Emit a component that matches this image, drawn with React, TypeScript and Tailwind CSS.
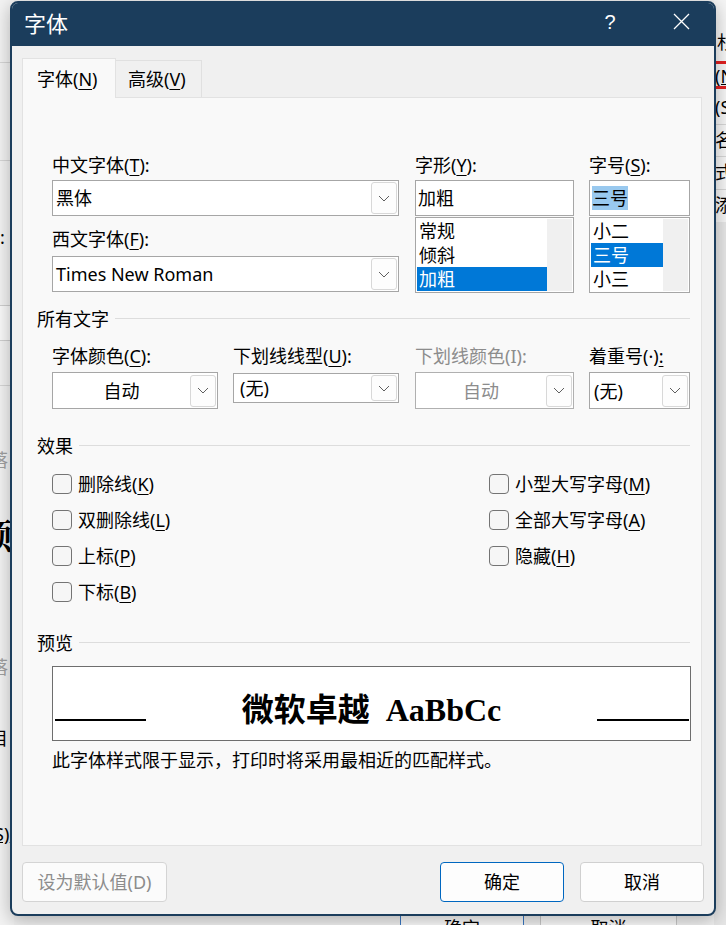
import React from "react";

const FONT = "font-[Noto_Sans,Noto_Sans_CJK_SC,sans-serif]";

const Chevron = ({ color = "#5f5f5f" }: { color?: string }) => (
  <svg width="12" height="7" viewBox="0 0 12 7">
    <path d="M1 1l5 5 5-5" fill="none" stroke={color} strokeWidth="1" />
  </svg>
);

const DropBtn = ({ h = 32 }: { h?: number }) => (
  <div
    className={`w-[26px] ${h === 32 ? "h-[32px]" : "h-[26px]"} shrink-0 border border-[#d8d8d8] rounded-[3px] bg-[#fdfdfd] flex items-center justify-center`}
  >
    <Chevron />
  </div>
);

const U = ({ children }: { children: React.ReactNode }) => (
  <span className="underline underline-offset-[3px] decoration-1">{children}</span>
);

const Label = ({ children, gray }: { children: React.ReactNode; gray?: boolean }) => (
  <div className={`h-[24px] leading-[24px] text-[18px] whitespace-nowrap ${gray ? "text-[#8c8c8c]" : "text-black"}`}>
    {children}
  </div>
);

const Heading = ({ text }: { text: string }) => (
  <div className="flex items-center pl-[14px] pr-[11px]">
    <span className="h-[24px] leading-[24px] text-[18px] text-black">{text}</span>
    <div className="flex-1 ml-[6px] h-px bg-[#dddddd] -mt-[2px]" />
  </div>
);

const Checkbox = ({ children }: { children: React.ReactNode }) => (
  <div className="flex items-center h-[24px]">
    <div className="w-[20px] h-[20px] border border-[#747474] rounded-[4px] bg-[#f6f6f6] shrink-0" />
    <span className="ml-[6px] text-[18px] leading-[24px] text-black whitespace-nowrap">{children}</span>
  </div>
);

export default function App() {
  return (
    <div className={`relative w-[726px] h-[925px] overflow-hidden bg-[#f0f0f0] ${FONT}`}>
      {/* background window fragments */}
      <div className="absolute left-0 top-0 w-[14px] h-[925px] bg-[#f3f3f3]">
        <div className="absolute left-0 top-[62px] w-[14px] h-px bg-[#d6d6d6]" />
        <div className="absolute left-0 top-[160px] w-[14px] h-px bg-[#d6d6d6]" />
        <div className="absolute left-0 top-[225px] text-[18px] leading-[24px] text-black">:</div>
        <div className="absolute left-0 top-[305px] w-[14px] h-[36px] border-y border-[#cfcfcf] bg-[#fafafa]" />
        <div className="absolute left-0 top-[385px] w-[14px] h-px bg-[#d6d6d6]" />
        <div className="absolute -left-[10px] top-[448px] text-[18px] leading-[24px] text-[#a0a0a0]">落</div>
        <div className="absolute -left-[22px] top-[518px] text-[34px] leading-[40px] font-[Liberation_Serif,Noto_Serif_CJK_SC,serif] font-bold text-black">颀</div>
        <div className="absolute -left-[10px] top-[655px] text-[18px] leading-[24px] text-[#a0a0a0]">落</div>
        <div className="absolute -left-[8px] top-[696px] text-[18px] leading-[24px] text-black">,</div>
        <div className="absolute -left-[10px] top-[726px] text-[18px] leading-[24px] text-black">目</div>
        <div className="absolute -left-[4px] top-[778px] text-[18px] leading-[24px] text-black">,</div>
        <div className="absolute -left-[6px] top-[822px] text-[18px] leading-[24px] text-black underline">S)</div>
      </div>
      <div className="absolute right-0 top-0 w-[12px] h-[925px] bg-[#e6e6e6]">
        <div className="absolute left-0 top-0 w-[12px] h-[222px] bg-[#f5f5f5]" />
        <div className="absolute left-[3px] top-[30px] text-[18px] leading-[24px] text-black">杉</div>
        <div className="absolute left-0 top-[61px] w-[12px] h-[3px] bg-[#e02020]" />
        <div className="absolute left-[1px] top-[64px] text-[18px] leading-[24px] text-black underline">(N</div>
        <div className="absolute left-0 top-[86px] w-[12px] h-[3px] bg-[#e02020]" />
        <div className="absolute left-[1px] top-[95px] text-[18px] leading-[24px] text-black">(S</div>
        <div className="absolute left-0 top-[124px] w-[12px] h-px bg-[#d6d6d6]" />
        <div className="absolute left-[1px] top-[128px] text-[18px] leading-[24px] text-black">名</div>
        <div className="absolute left-0 top-[156px] w-[12px] h-px bg-[#d6d6d6]" />
        <div className="absolute left-[1px] top-[160px] text-[18px] leading-[24px] text-black">式</div>
        <div className="absolute left-0 top-[189px] w-[12px] h-px bg-[#d6d6d6]" />
        <div className="absolute left-[1px] top-[193px] text-[18px] leading-[24px] text-black">添</div>
      </div>
      <div className="absolute left-[400px] top-[905px] w-[124px] h-[46px] border border-[#3a78c2] bg-[#fbfbfb] flex items-center justify-center text-[18px] text-black">确定</div>
      <div className="absolute left-[540px] top-[905px] w-[137px] h-[46px] border border-[#c8c8c8] bg-[#fbfbfb] flex items-center justify-center text-[18px] text-black">取消</div>

      {/* dialog */}
      <div className="absolute left-[10px] top-[1px] w-[706px] h-[915px] border-2 border-[#1b3d5c] rounded-[8px] bg-[#f0f0f0] flex flex-col overflow-hidden shadow-[0_4px_18px_rgba(0,0,0,0.28)]">
        {/* title bar */}
        <div className="h-[43px] bg-[#1b3d5c] flex items-center shrink-0">
          <div className="pl-[12px] text-[22px] leading-[28px] text-white -mt-[4px]">字体</div>
          <div className="flex-1" />
          <div className="w-[46px] flex items-center justify-center text-white text-[20px] leading-[26px] font-[Liberation_Sans,sans-serif] -mt-[6px]">?</div>
          <div className="ml-[25px] mr-[10px] w-[46px] flex items-center justify-center -mt-[6px]">
            <svg width="17" height="17" viewBox="0 0 17 17">
              <path d="M1 1L16 16M16 1L1 16" stroke="#ffffff" strokeWidth="1.3" fill="none" />
            </svg>
          </div>
        </div>

        {/* body */}
        <div className="pt-[12px] pl-[10px] flex flex-col">
          {/* tabs */}
          <div className="flex items-end h-[39px] relative z-10">
            <div className="w-[94px] h-[40px] -mb-px bg-[#f9f9f9] border-l border-t border-r border-[#e2e2e2] flex items-center pl-[14px] text-[18px] leading-[24px] text-black">
              字体(<U>N</U>)
            </div>
            <div className="w-[86px] h-[37px] bg-[#f0f0f0] border-t border-r border-[#e0e0e0] flex items-center pl-[12px] text-[18px] leading-[24px] text-black">
              高级(<U>V</U>)
            </div>
          </div>

          {/* panel */}
          <div className="w-[680px] h-[749px] bg-[#f9f9f9] border border-[#e2e2e2] pt-[55px] flex flex-col">
            {/* section 1 */}
            <div className="flex pl-[29px]">
              <div className="w-[347px] flex flex-col">
                <Label>中文字体(<U>T</U>):</Label>
                <div className="mt-[3px] h-[36px] border border-[#a6a6a6] bg-white flex items-center pl-[3px] pr-px">
                  <span className="flex-1 text-[18px] leading-[24px] text-black">黑体</span>
                  <DropBtn />
                </div>
                <div className="mt-[11px]">
                  <Label>西文字体(<U>F</U>):</Label>
                </div>
                <div className="mt-[5px] h-[36px] border border-[#a6a6a6] bg-white flex items-center pl-[3px] pr-px">
                  <span className="flex-1 text-[18px] leading-[24px] text-black">Times New Roman</span>
                  <DropBtn />
                </div>
              </div>

              <div className="ml-[16px] w-[159px] flex flex-col">
                <Label>字形(<U>Y</U>):</Label>
                <div className="mt-[3px] h-[36px] border border-[#a6a6a6] bg-white flex items-center pl-[2px]">
                  <span className="text-[18px] leading-[24px] text-black">加粗</span>
                </div>
                <div className="mt-px h-[76px] border border-[#a6a6a6] bg-white flex pt-px pl-px">
                  <div className="flex-1 flex flex-col">
                    <div className="h-[24px] leading-[24px] text-[18px] text-black pl-[2px]">常规</div>
                    <div className="h-[24px] leading-[24px] text-[18px] text-black pl-[2px]">倾斜</div>
                    <div className="h-[24px] leading-[24px] text-[18px] text-white bg-[#0078d7] pl-[2px]">加粗</div>
                  </div>
                  <div className="w-[25px] h-[72px] bg-[#f0f0f0] mr-px" />
                </div>
              </div>

              <div className="ml-[15px] w-[101px] flex flex-col">
                <Label>字号(<U>S</U>):</Label>
                <div className="mt-[3px] h-[36px] border border-[#a6a6a6] bg-white flex items-center pl-[2px]">
                  <span className="text-[18px] leading-[24px] text-black bg-[#99c9ef]">三号</span>
                </div>
                <div className="mt-px h-[76px] border border-[#a6a6a6] bg-white flex pt-px pl-px">
                  <div className="flex-1 flex flex-col">
                    <div className="h-[24px] leading-[24px] text-[18px] text-black pl-[2px]">小二</div>
                    <div className="h-[24px] leading-[24px] text-[18px] text-white bg-[#0078d7] pl-[2px]">三号</div>
                    <div className="h-[24px] leading-[24px] text-[18px] text-black pl-[2px]">小三</div>
                  </div>
                  <div className="w-[25px] h-[72px] bg-[#f0f0f0] mr-px" />
                </div>
              </div>
            </div>

            {/* 所有文字 */}
            <div className="mt-[14px]">
              <Heading text="所有文字" />
            </div>
            <div className="mt-[13px] flex pl-[29px]">
              <div className="w-[166px] flex flex-col">
                <Label>字体颜色(<U>C</U>):</Label>
                <div className="mt-[4px] h-[37px] border border-[#a6a6a6] bg-white flex items-center pr-px">
                  <span className="flex-1 text-center text-[18px] leading-[24px] text-black">自动</span>
                  <DropBtn />
                </div>
              </div>
              <div className="ml-[15px] w-[166px] flex flex-col">
                <Label>下划线线型(<U>U</U>):</Label>
                <div className="mt-[5px] h-[30px] border border-[#a6a6a6] bg-white flex items-center pl-[6px] pr-px">
                  <span className="flex-1 text-[18px] leading-[24px] text-black">(无)</span>
                  <DropBtn h={26} />
                </div>
              </div>
              <div className="ml-[16px] w-[159px] flex flex-col">
                <Label gray>下划线颜色(I):</Label>
                <div className="mt-[4px] h-[37px] border border-[#b0b0b0] bg-white flex items-center pr-px">
                  <span className="flex-1 text-center text-[18px] leading-[24px] text-[#8c8c8c]">自动</span>
                  <DropBtn />
                </div>
              </div>
              <div className="ml-[15px] w-[101px] flex flex-col">
                <Label>着重号(·)<U>:</U></Label>
                <div className="mt-[4px] h-[37px] border border-[#a6a6a6] bg-white flex items-center pl-[4px] pr-px">
                  <span className="flex-1 text-[18px] leading-[24px] text-black">(无)</span>
                  <DropBtn />
                </div>
              </div>
            </div>

            {/* 效果 */}
            <div className="mt-[25px]">
              <Heading text="效果" />
            </div>
            <div className="mt-[14px] flex pl-[29px]">
              <div className="w-[437px] flex flex-col gap-[12px]">
                <Checkbox>删除线(<U>K</U>)</Checkbox>
                <Checkbox>双删除线(<U>L</U>)</Checkbox>
                <Checkbox>上标(<U>P</U>)</Checkbox>
                <Checkbox>下标(<U>B</U>)</Checkbox>
              </div>
              <div className="flex flex-col gap-[12px]">
                <Checkbox>小型大写字母(<U>M</U>)</Checkbox>
                <Checkbox>全部大写字母(<U>A</U>)</Checkbox>
                <Checkbox>隐藏(<U>H</U>)</Checkbox>
              </div>
            </div>

            {/* 预览 */}
            <div className="mt-[27px]">
              <Heading text="预览" />
            </div>
            <div className="mt-[11px] ml-[29px] w-[639px] h-[75px] border border-[#6e6e6e] bg-white flex items-baseline pl-[2px] pr-px pt-[20px]">
              <div className="w-[91px] h-[2px] bg-black shrink-0" />
              <div className="flex-1 text-center leading-[40px] text-black whitespace-nowrap">
                <span className="text-[32px] font-bold font-[Noto_Sans_CJK_SC,sans-serif]">微软卓越</span>
                <span className="ml-[16px] text-[32px] font-bold font-[Liberation_Serif,serif]">AaBbCc</span>
              </div>
              <div className="w-[92px] h-[2px] bg-black shrink-0" />
            </div>
            <div className="mt-[7px] pl-[29px] text-[18px] leading-[24px] text-black whitespace-nowrap">
              此字体样式限于显示，打印时将采用最相近的匹配样式。
            </div>
          </div>

          {/* buttons */}
          <div className="mt-[16px] flex items-center w-[682px]">
            <div className="w-[145px] h-[40px] border border-[#d4d4d4] rounded-[4px] bg-[#fbfbfb] flex items-center justify-center text-[18px] text-[#8c8c8c]">
              设为默认值(D)
            </div>
            <div className="flex-1" />
            <div className="w-[124px] h-[40px] border border-[#0067c0] rounded-[4px] bg-[#fdfdfd] flex items-center justify-center text-[18px] text-black">
              确定
            </div>
            <div className="ml-[16px] w-[124px] h-[40px] border border-[#d0d0d0] rounded-[4px] bg-[#fdfdfd] flex items-center justify-center text-[18px] text-black">
              取消
            </div>
          </div>
        </div>
      </div>
    </div>
  );
}
